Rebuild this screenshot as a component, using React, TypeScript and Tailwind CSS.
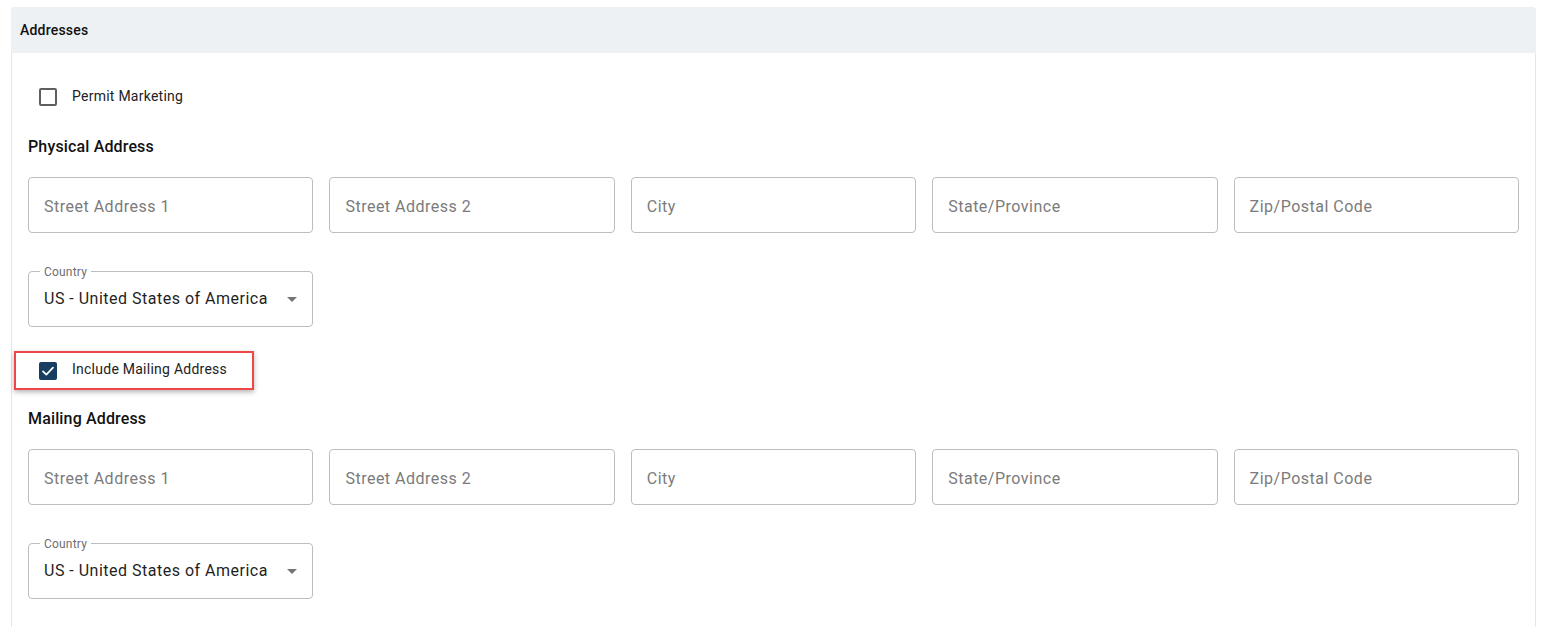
import React from "react";

const fields = ["Street Address 1", "Street Address 2", "City", "State/Province", "Zip/Postal Code"];

function TextField({ placeholder }: { placeholder: string }) {
  return (
    <div className="h-[56px] rounded-[4px] border border-[#bdbdbd] bg-white flex items-center px-[15px]">
      <input
        className="w-full mt-[3px] bg-transparent outline-none text-[16px] text-[#212121] placeholder:text-[#7b7b7b] tracking-[0.5px]"
        placeholder={placeholder}
      />
    </div>
  );
}

function CountrySelect() {
  return (
    <div className="relative w-[285px] h-[56px] rounded-[4px] border border-[#bdbdbd] bg-white flex items-center pl-[15px] pr-[14px]">
      <span className="absolute left-[11px] -top-[7px] bg-white px-[4px] text-[12px] leading-[14px] text-[#6f6f6f] tracking-[0.2px]">
        Country
      </span>
      <span className="flex-1 text-[16px] text-[#1f1f1f] tracking-[0.5px]">US - United States of America</span>
      <svg width="24" height="24" viewBox="0 0 24 24" className="-mr-[6px]">
        <path d="M7 10l5 5 5-5z" fill="#757575" />
      </svg>
    </div>
  );
}

function Checkbox({ checked }: { checked: boolean }) {
  return checked ? (
    <span className="w-[18px] h-[18px] rounded-[2px] bg-[#173d61] flex items-center justify-center">
      <svg width="16" height="16" viewBox="0 0 24 24">
        <path d="M4.5 12.5l5 5L19.5 7" fill="none" stroke="#fff" strokeWidth="2.6" strokeLinecap="round" strokeLinejoin="round" />
      </svg>
    </span>
  ) : (
    <span className="w-[18px] h-[18px] rounded-[2px] border-2 border-[#5f5f5f] bg-white" />
  );
}

function AddressBlock({ title }: { title: string }) {
  return (
    <div>
      <h3 className="text-[16px] leading-[24px] font-medium text-[#111] tracking-[0.15px] pt-[1px]">{title}</h3>
      <div className="mt-[18px] grid grid-cols-5 gap-x-[16px]">
        {fields.map((f) => (
          <TextField key={f} placeholder={f} />
        ))}
      </div>
      <div className="mt-[38px]">
        <CountrySelect />
      </div>
    </div>
  );
}

export default function App() {
  return (
    <div
      className="min-h-[627px] bg-white pl-[11px] pr-[9px] pt-[7px]"
      style={{ fontFamily: "Roboto, 'Liberation Sans', sans-serif" }}
    >
      <div className="border border-[#e4e7ea] rounded-t-[4px] min-h-[640px] bg-white">
        <div className="h-[46px] bg-[#edf1f4] flex items-center pl-[9px] -mt-px -mx-px rounded-t-[4px]">
          <span className="text-[14px] font-medium text-[#111] tracking-[0.2px]">Addresses</span>
        </div>
        <div className="px-[16px] pt-[24px]">
          <label className="h-[40px] flex items-center pl-[11px] gap-[15px]">
            <Checkbox checked={false} />
            <span className="text-[14px] text-[#222] tracking-[0.25px] -mt-[2px]">Permit Marketing</span>
          </label>
          <div className="mt-[17px]">
            <AddressBlock title="Physical Address" />
          </div>
          <div className="mt-[24px] -ml-[14px] w-[240px] h-[39px] border-2 border-[#f04646] shadow-[0_2px_5px_rgba(0,0,0,0.3)] flex items-center pl-[23px] gap-[15px]">
            <Checkbox checked={true} />
            <span className="text-[14px] text-[#222] tracking-[0.25px] -mt-[3px]">Include Mailing Address</span>
          </div>
          <div className="mt-[16px]">
            <AddressBlock title="Mailing Address" />
          </div>
        </div>
      </div>
    </div>
  );
}
